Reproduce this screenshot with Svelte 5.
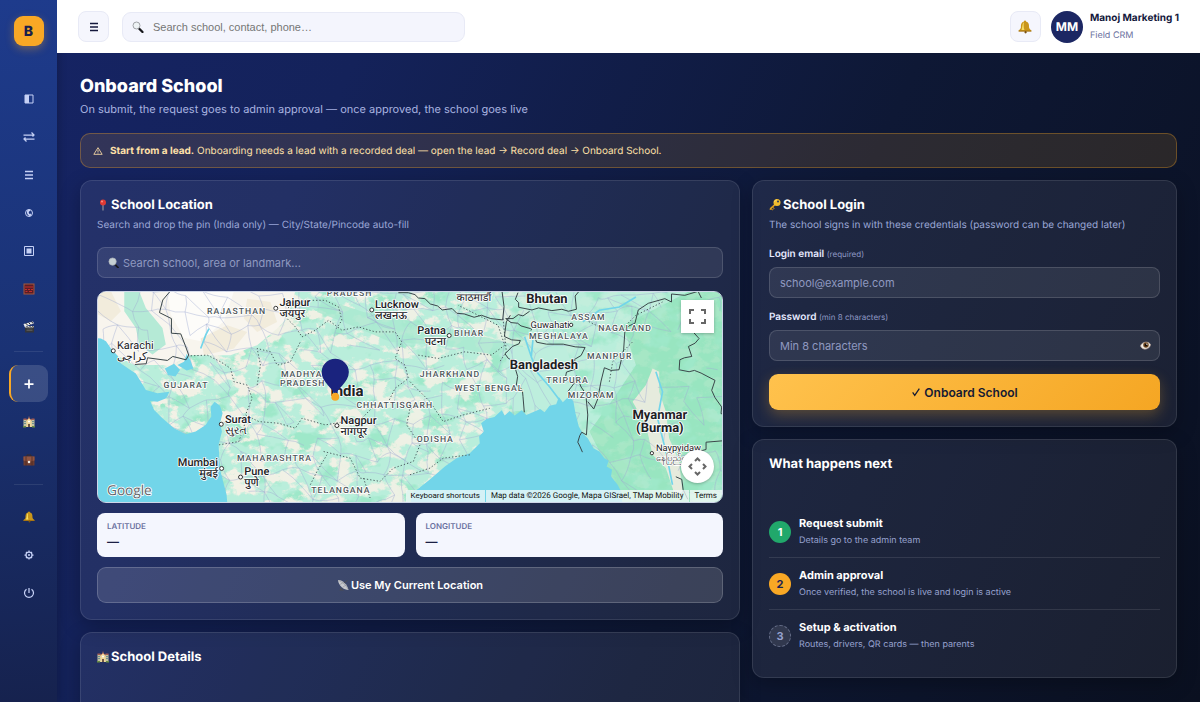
<script>
  let search = $state("")
  let place = $state("")
  let email = $state("")
  let password = $state("")
  let showPassword = $state(false)

  const nav = [
    { icon: "panel", label: "Dashboard" },
    { icon: "swap", label: "Pipeline" },
    { icon: "list", label: "Leads" },
    { icon: "phone", label: "Calls" },
    { icon: "square", label: "Visits" },
    { icon: "calendar", label: "Calendar" },
    { icon: "clapper", label: "Demos" },
    null,
    { icon: "plus", label: "Onboard School", active: true },
    { icon: "school", label: "Schools" },
    { icon: "briefcase", label: "Deals" },
    null,
    { icon: "bell", label: "Notifications" },
    { icon: "gear", label: "Settings" },
    { icon: "power", label: "Log out" },
  ]

  const steps = [
    { state: "done", title: "Request submit", text: "Details go to the admin team" },
    { state: "now", title: "Admin approval", text: "Once verified, the school is live and login is active" },
    { state: "todo", title: "Setup & activation", text: "Routes, drivers, QR cards — then parents" },
  ]

  // map units are a third of a pixel
  const regions = [
    ["RAJASTHAN", 438, 86],
    ["PRADESH", 778, 32],
    ["GUJARAT", 286, 308],
    ["MADHYA", 634, 277],
    ["PRADESH", 637, 304],
    ["CHHATTISGARH", 914, 368],
    ["MAHARASHTRA", 552, 528],
    ["TELANGANA", 752, 624],
    ["BIHAR", 1138, 153],
    ["JHARKHAND", 1080, 275],
    ["WEST BENGAL", 1198, 317],
    ["ODISHA", 1036, 471],
    ["ASSAM", 1497, 104],
    ["NAGALAND", 1607, 136],
    ["MEGHALAYA", 1408, 160],
    ["MANIPUR", 1561, 222],
    ["TRIPURA", 1434, 293],
    ["MIZORAM", 1505, 338],
  ]

  const cities = [
    { name: "Karachi", local: "كراچی", x: 78, y: 191, dot: [67, 197] },
    { name: "Jaipur", local: "जयपुर", x: 567, y: 63, dot: [556, 69], bold: true },
    { name: "Lucknow", local: "लखनऊ", x: 855, y: 68, dot: [845, 74], bold: true },
    { name: "Surat", local: "સુરત", x: 403, y: 413, dot: [392, 418], bold: true },
    { name: "Nagpur", local: "नागपूर", x: 751, y: 416, dot: [740, 422], bold: true },
    { name: "Mumbai", local: "मुंबई", x: 382, y: 545, dot: [393, 551], end: true, bold: true },
    { name: "Pune", local: "पुणे", x: 461, y: 572, dot: [450, 577], bold: true },
    { name: "Patna", local: "पटना", x: 1068, y: 146, dot: [1078, 151], end: true, bold: true },
  ]

  const countries = [
    ["Bhutan", 1372, 52],
    ["Bangladesh", 1363, 251],
    ["Myanmar", 1712, 401],
    ["(Burma)", 1712, 440],
  ]

  let seed = 11
  const rnd = () => {
    seed = (seed * 16807) % 2147483647
    return seed / 2147483647
  }

  const cols = 36
  const rows = 13
  const nodes = []
  for (let r = 0; r < rows; r++) {
    for (let c = 0; c < cols; c++) {
      nodes.push([c * 55 + rnd() * 44, r * 55 + rnd() * 44])
    }
  }
  const link = (a, b) => {
    const mx = (a[0] + b[0]) / 2 + (rnd() - 0.5) * 20
    const my = (a[1] + b[1]) / 2 + (rnd() - 0.5) * 20
    return `M${a.map(Math.round)}Q${Math.round(mx)} ${Math.round(my)} ${b.map(Math.round)}`
  }
  let roads = ""
  for (let r = 0; r < rows - 1; r++) {
    for (let c = 0; c < cols - 1; c++) {
      const i = r * cols + c
      if (c > 29 && rnd() < 0.6) continue
      if (rnd() < 0.65) roads += link(nodes[i], nodes[i + 1])
      if (rnd() < 0.6) roads += link(nodes[i], nodes[i + cols])
      if (rnd() < 0.35) roads += link(nodes[i], nodes[i + cols + 1])
    }
  }
</script>

{#snippet icon(name, size = 12)}
  <svg width={size} height={size} viewBox="0 0 24 24" fill="none" aria-hidden="true">
    {#if name === "panel"}
      <path d="M4 4h16v16H4z" stroke="currentColor" stroke-width="2" />
      <path d="M4 4h8v16H4z" fill="currentColor" />
    {:else if name === "swap"}
      <path d="M1 8h21M17 3l5 5-3 3M23 16H2M7 21l-5-5 3-3" stroke="currentColor" stroke-width="2.500" />
    {:else if name === "list"}
      <path d="M4 5h16M4 12h16M4 19h16" stroke="currentColor" stroke-width="3" />
    {:else if name === "phone"}
      <circle cx="12" cy="12" r="7" stroke="currentColor" stroke-width="2" />
      <path d="M10 5c-4 4-2 11 4 14l3-3-2-3-2 1c-1-1-2-3-1-5l2-1 1-3z" fill="currentColor" />
    {:else if name === "square"}
      <path d="M3 3h18v18H3z" stroke="currentColor" stroke-width="2" />
      <path d="M7 7h10v10H7z" fill="currentColor" />
    {:else if name === "calendar"}
      <path d="M1 1h22v22H1z" fill="#a5593f" />
      <path d="M3 3h18v18H3z" fill="#5d1d24" />
      <path d="M4 8h16M4 13h4M10 13h4M16 13h4M5 17h4M12 17h6" stroke="#c22f2f" stroke-width="2" />
    {:else if name === "clapper"}
      <path d="M4 10h18v13H4z" fill="#35363a" />
      <path d="M1 6l19-5 2 4L3 11z" fill="#e9e9ea" />
      <path d="M3 10h19v3H4z" fill="#d9dadd" />
      <path d="M5 4l4 4M11 3l4 4M17 1l3 4M7 10l3 3M13 10l3 3M19 10l2 3" stroke="#26272b" stroke-width="2" />
      <path d="M7 16h12M7 19h12" stroke="#777" />
    {:else if name === "plus"}
      <path d="M12 3v18M3 12h18" stroke="currentColor" stroke-width="3.500" />
    {:else if name === "school"}
      <path d="M1 7h22v15H1z" fill="#c5c3a0" />
      <path d="M1 5h6v3H1zM17 5h6v3h-6z" fill="#a35d54" />
      <path d="M7 22V9l5-6 5 6v13z" fill="#efd89a" />
      <path d="M12 1v4M7 9l5-5 5 5" stroke="#b46a58" stroke-width="1.500" />
      <path d="M10 16h4v6h-4z" fill="#6d5646" />
      <path d="M2 11h4M2 15h4M18 11h4M18 15h4" stroke="#6f9190" stroke-width="2" />
      <circle cx="12" cy="11" r="2" fill="#fff" />
      <path d="M0 20h6v3H0zM18 20h6v3h-6z" fill="#688b45" />
    {:else if name === "briefcase"}
      <path d="M8 6V2h8v4" stroke="#3b2a27" stroke-width="2" />
      <path d="M1 5h22v18H1z" fill="#6b3c30" />
      <path d="M1 5h22v8l-8 2H9l-8-2z" fill="#915541" />
      <path d="M6 5v18M18 5v18" stroke="#4b2822" stroke-width="1.500" />
      <circle cx="12" cy="16" r="2.500" fill="#f0eee8" />
    {:else if name === "bell"}
      <path d="M12 1c2 0 2 2 2 2 5 1 5 6 5 10 0 3 4 4 4 6H1c0-2 4-3 4-6 0-4 0-9 5-10 0 0 0-2 2-2z" fill="#c9961a" />
      <path d="M10 4c-3 2-2 8-4 13h5c-2-5-1-10-1-13z" fill="#f8dd62" />
      <path d="M1 18h22v2H1z" fill="#a87512" />
      <circle cx="13" cy="21" r="2" fill="#7a5110" />
    {:else if name === "gear"}
      <circle cx="12" cy="12" r="6" stroke="currentColor" stroke-width="2.500" />
      <circle cx="12" cy="12" r="2" fill="currentColor" />
      <path d="M12 3v3M12 18v3M3 12h3M18 12h3M6 6l2 2M16 16l2 2M18 6l-2 2M8 16l-2 2" stroke="currentColor" stroke-width="2.500" />
    {:else if name === "power"}
      <path d="M12 2v10M7 4.500a9 9 0 1 0 10 0" stroke="currentColor" stroke-width="2.500" />
    {:else if name === "lens"}
      <path d="M14 15l7 7" stroke="#17181c" stroke-width="4.500" stroke-linecap="round" />
      <circle cx="9" cy="9" r="7" fill="#eef3f5" stroke="#85888e" stroke-width="1.500" />
    {:else if name === "lens-light"}
      <path d="M15 16l7 7" stroke="#1a1b20" stroke-width="4" stroke-linecap="round" />
      <circle cx="10" cy="10" r="8" fill="#c6d0d4" stroke="#a9b0b8" stroke-width="1.500" />
    {:else if name === "warn"}
      <path d="M12 4L2 20h20z" stroke="currentColor" stroke-width="2" stroke-linejoin="round" />
      <path d="M12 9v6M12 16v2" stroke="currentColor" stroke-width="2" />
    {:else if name === "pushpin"}
      <path d="M12 11v12" stroke="#8d9198" stroke-width="2.500" />
      <circle cx="12" cy="7" r="6" fill="#df3a34" />
      <circle cx="10" cy="5" r="2" fill="#ff8f83" />
    {:else if name === "key"}
      <path d="M14 11L3 22l-2-1 1-3L12 9z" fill="#e0a21e" />
      <path d="M4 20l3 2 2-3M7 16l4 3" stroke="#c98a14" stroke-width="2" />
      <circle cx="16" cy="7" r="7" fill="#f3bd2c" />
      <circle cx="18" cy="5" r="2" fill="#27345c" />
      <path d="M11 6c1-3 3-4 5-4" stroke="#ffe483" stroke-width="1.500" />
    {:else if name === "dish"}
      <path d="M2 2c8-1 19 9 21 20-9 0-20-8-21-20z" fill="#c7c9cd" />
      <path d="M3 3c7 2 16 10 19 18M6 11l8-5M11 17l8-6" stroke="#8e9197" stroke-width="1.200" />
      <path d="M14 8l7-5" stroke="#4b4d53" stroke-width="2" />
      <path d="M7 17l-2 6h9z" fill="#4b4d53" />
    {:else if name === "eye"}
      <path d="M1 13C4 4 18 1 23 10c-1 10-17 15-22 3z" fill="#f1ece4" stroke="#a7938a" stroke-width="1.500" />
      <circle cx="13" cy="11" r="6" fill="#6c451f" />
      <circle cx="13" cy="11" r="3" fill="#120c08" />
      <circle cx="15" cy="9" r="1.500" fill="#fff" />
    {:else if name === "check"}
      <path d="M4 13l5 7L20 4" stroke="currentColor" stroke-width="3" />
    {/if}
  </svg>
{/snippet}

<div class="app">
  <aside class="sidebar">
    <a class="logo" href="#home">B</a>
    <nav>
      {#each nav as item}
        {#if item}
          <a href="#nav" class="item" class:active={item.active} aria-label={item.label}>
            {@render icon(item.icon)}
          </a>
        {:else}
          <hr />
        {/if}
      {/each}
    </nav>
  </aside>

  <div class="page">
    <header>
      <button class="tool" aria-label="Toggle menu">{@render icon("list")}</button>
      <label class="search">
        {@render icon("lens", 12)}
        <input type="search" placeholder="Search school, contact, phone…" aria-label="Search" bind:value={search} />
      </label>
      <button class="tool bell" aria-label="Notifications">{@render icon("bell", 14)}</button>
      <div class="avatar">MM</div>
      <div class="user">
        <strong>Manoj Marketing 1</strong>
        <span>Field CRM</span>
      </div>
    </header>

    <main>
      <h1>Onboard School</h1>
      <p class="lead">On submit, the request goes to admin approval — once approved, the school goes live</p>

      <div class="notice">
        {@render icon("warn", 10)}
        <p><strong>Start from a lead.</strong> Onboarding needs a lead with a recorded deal — open the lead → Record deal → Onboard School.</p>
      </div>

      <div class="columns">
        <div class="col">
          <section class="card">
            <h2>{@render icon("pushpin")}School Location</h2>
            <p class="hint">Search and drop the pin (India only) — City/State/Pincode auto-fill</p>
            <label class="field place">
              {@render icon("lens-light", 11)}
              <input type="text" placeholder="Search school, area or landmark..." aria-label="Search place" bind:value={place} />
            </label>

            <div class="map">
              <svg class="tiles" viewBox="21 18 1878 636" preserveAspectRatio="xMidYMid slice" role="img" aria-label="Map of India">
                <defs>
                  <filter id="cream" x="0" y="0" width="100%" height="100%" color-interpolation-filters="sRGB">
                    <feTurbulence type="fractalNoise" baseFrequency="0.019 0.027" numOctaves="5" seed="4" />
                    <feColorMatrix values="0 0 0 0 .96  0 0 0 0 .945  0 0 0 0 .9  8 0 0 0 -3.900" />
                  </filter>
                  <filter id="mint" x="0" y="0" width="100%" height="100%" color-interpolation-filters="sRGB">
                    <feTurbulence type="fractalNoise" baseFrequency="0.012 0.016" numOctaves="4" seed="9" />
                    <feColorMatrix values="0 0 0 0 .62  0 0 0 0 .91  0 0 0 0 .79  6 0 0 0 -3.200" />
                  </filter>
                  <linearGradient id="fade">
                    <stop offset="0" stop-color="#fff" />
                    <stop offset=".62" stop-color="#fff" stop-opacity=".85" />
                    <stop offset=".72" stop-color="#fff" stop-opacity=".15" />
                    <stop offset="1" stop-color="#fff" stop-opacity=".15" />
                  </linearGradient>
                  <mask id="dry" maskUnits="userSpaceOnUse" x="0" y="0" width="1920" height="680">
                    <rect width="1920" height="680" fill="url(#fade)" />
                  </mask>
                </defs>

                <rect width="1920" height="680" fill="#b9eedb" />
                <path d="M1600 120L1720 60 1800 18 1900 18V654H1600L1540 520 1500 440 1580 330 1640 240z" fill="#98e5c0" />
                <rect width="1920" height="680" filter="url(#mint)" />
                <g mask="url(#dry)"><rect width="1920" height="680" filter="url(#cream)" /></g>
                <path d="M0 0H620L590 100 560 130 500 180 420 210 300 210 240 240 130 240 60 200 0 150z" fill="#f8f5ee" />
                <path d="M100 18l45 0 20 50 50 60 10 50-40 30-40-30-10-50-35-50z" fill="#b5ead6" />
                <path d="M230 18h200l-30 90-70 60-50-10-40-70z" fill="#fdfcf9" />
                <path d="M60 18l30 60-30 30-39-20V18zM330 160l80-40 60 20-40 50-90 20zM470 40l70 10 20 60-60 30-40-40z" fill="#f2ecdc" />
                <path d="M700 40l120 40 160 30 150 30 150 40-60 30-160-30-160-10-140-60-80-30z" fill="#a9e8d0" opacity=".8" />
                <path d="M1630 350l40-50 20-50 20 10 0 60 20 60 10 80 30 70 10 90-20 20-30-90-40-40-20-90z" fill="#e6ebdd" />
                <path d="M1250 180l90 10 90 0 30 80 20 70-90 30-120 10-20-90z" fill="#bdeedd" />

                <path class="roads" d={roads} />
                <path class="river" d="M1330 165l-5 50 20 50 35 40 30 40M1480 110l50-35 60-10 50-30M330 190l15-40 10-20M1325 215l-20-60M1700 260l20 60-15 80 25 100 20 100" />

                <path
                  class="sea"
                  d="M0 158L30 160 45 168 60 190 80 212 90 235 112 250 135 265 150 290 165 315 200 325 236 320 226 340 200 350 178 348 190 375 215 400 250 430 285 448 315 440 345 420 362 395 360 365 372 350 388 362 396 385 388 415 394 440 384 480 386 520 390 560 400 600 408 630 412 680H0z"
                />
                <path class="sea" d="M222 250l28-14 18 18-14 20-22-4zM288 206l12 22 8 22-20 6-28-16 20-10z" />
                <path
                  class="sea"
                  d="M960 680L966 624 985 612 1025 580 1065 545 1100 520 1140 505 1170 475 1168 455 1182 440 1174 415 1190 402 1214 396 1236 376 1245 392 1260 378 1275 392 1296 376 1310 390 1335 380 1352 372 1365 382 1380 362 1400 358 1408 336 1420 352 1440 332 1452 350 1458 385 1468 425 1480 446 1495 460 1512 490 1530 500 1545 520 1558 528 1552 545 1568 555 1565 575 1585 600 1595 620 1602 680z"
                />

                <path
                  class="state"
                  d="M300 212l50-2 40 20 30 20 10 40 40 10 15 40-20 50 40 20 60 5 50 15 20-30 70 20 60-10 50-10 30-30 50-20 20-40 40-30-10-40-30-20 20-50-20-30-60 0-50-15-50 10-40-30-40 30-40 20-20-30-30-30 10-30 50-20 60 0 40 20 10 40-20 30M500 300l10-60-10-50 40 10 20 40 40-10 30-60M385 480l60-10 20-60M700 500l80 20 30 60 60 10 40-40 60-20 20-50-40-60 10-50 60-10M660 600l20-40 30-50M820 580l20 60M985 210l60 10 80-20 80 10 40-30-20-60-60-30-60-30M960 290l60 60 40 60 60-20 80-20M960 570l60-20 40-30 80-10M1240 100l10 100-20 30M1480 100l60 30 60 0 40-40 80-40M1560 290l10-60 60-60"
                />
                <path
                  class="border"
                  d="M238 18l-22 26-10 38 36 18 0 44 28 2 14 36 10 28-8 14-40-10-16 12-60-8-4 18-34 2M925 22h30l20 6 10 10 20 2 16 16 22 6 14 12 30-4 14 14 22 2 30 10 22-6 28 10 36 4 4-40-6-46M1285 22l-8 20 10 10 0 14 40 8 20-6 40 8 30-4 20 6 24-6-4-40 10-12M1320 78l-20 14-14-4-16 12-22 0 16 12 20 2 10 8 28 8 4 2-2 4M1262 90l-12 20-6 44 22 10 26 2-4 10-20 8-22 22 10 14 20 10 2 24 6 20-4 26 18 14 2 20 4 48M1335 155l6 16 30 6 50 0 36 8 30 2-12 24-20 12 6 28-30 10-6 30M1435 320l18-24 8-24 14 34 14 20 6 64-4 60-14-8-6 10-6 20 6 12 8 18M1495 350l18 22 12-30 10-54 10-40 20 8 24-2 14-60 4-60 12-12 18-8 10-40 30-20 50-14 20 10 0-24 40 4 40-12 10 20M1812 140l18 20-12 14-20 10 10 30-22 4-14 6-2 30 30 6 16-4 20 8 42 22-10 30 10 22 20 28-2 20 60 10M1899 468l-48 4 0 22-60 16M1760 576l18 8 4 30 14 30"
                />

                <g class="region">
                  {#each regions as [name, x, y]}
                    <text {x} {y}>{name}</text>
                  {/each}
                </g>
                {#each cities as c}
                  <g class="city" class:end={c.end} class:bold={c.bold}>
                    <circle cx={c.dot[0]} cy={c.dot[1]} r="6" />
                    <text x={c.x} y={c.y}>{c.name}</text>
                    <text class="local" x={c.x} y={c.y + 33}>{c.local}</text>
                  </g>
                {/each}
                <g class="small">
                  <text x="1323" y="127">Guwahati</text>
                  <circle cx="1445" cy="119" r="5" />
                  <text class="nepal" x="1100" y="48">काठमाडौं</text>
                  <text x="1700" y="500">Naypyidaw</text>
                  <text x="1700" y="528">နေပြည်တော်</text>
                  <circle cx="1688" cy="505" r="5" />
                </g>
                <g class="country">
                  {#each countries as [name, x, y]}
                    <text {x} {y}>{name}</text>
                  {/each}
                  <text class="india" x="770" y="332">India</text>
                </g>

                <path d="M735 333c-4-22-41-40-41-72a41 40 0 0 1 82 0c0 32-37 50-41 72z" fill="#1a237e" />
                <circle cx="735" cy="335" r="12" fill="#f9a825" />
                <text class="google" x="48" y="630">Google</text>
              </svg>
              <button class="full" aria-label="Toggle fullscreen view">
                <svg width="17" height="17" viewBox="0 0 17 17" fill="none" stroke="#666" stroke-width="2">
                  <path d="M1 6V2h4M12 2h4v4M16 11v4h-4M5 15H1v-4" />
                </svg>
              </button>
              <button class="pan" aria-label="Map camera controls">
                <svg width="19" height="19" viewBox="0 0 19 19" fill="none" stroke="#666" stroke-width="2">
                  <path d="M7 4l2.500-2.500L12 4M7 15l2.500 2.500L12 15M4 7L1.500 9.500 4 12M15 7l2.500 2.500L15 12" />
                </svg>
              </button>
              <div class="credits">
                <button>Keyboard shortcuts</button>
                <span>Map data ©2026 Google, Mapa GISrael, TMap Mobility</span>
                <a href="#terms">Terms</a>
              </div>
            </div>

            <div class="coords">
              <div><span>LATITUDE</span><b>—</b></div>
              <div><span>LONGITUDE</span><b>—</b></div>
            </div>
            <button class="wide ghost">{@render icon("dish")}Use My Current Location</button>
          </section>

          <section class="card details">
            <h2>{@render icon("school")}School Details</h2>
          </section>
        </div>

        <div class="col">
          <form class="card" onsubmit={(e) => e.preventDefault()}>
            <h2>{@render icon("key")}School Login</h2>
            <p class="hint">The school signs in with these credentials (password can be changed later)</p>
            <label class="caption" for="email">Login email <small>(required)</small></label>
            <div class="field">
              <input id="email" type="email" placeholder="school@example.com" bind:value={email} />
            </div>
            <label class="caption" for="password">Password <small>(min 8 characters)</small></label>
            <div class="field">
              <input id="password" type={showPassword ? "text" : "password"} placeholder="Min 8 characters" bind:value={password} />
              <button type="button" class="eye" aria-label="Show password" onclick={() => (showPassword = !showPassword)}>
                {@render icon("eye", 11)}
              </button>
            </div>
            <button class="wide primary">{@render icon("check", 10)}Onboard School</button>
          </form>

          <section class="card">
            <h2>What happens next</h2>
            <ol>
              {#each steps as step, i}
                <li>
                  <span class="num {step.state}">{i + 1}</span>
                  <div>
                    <strong>{step.title}</strong>
                    <span>{step.text}</span>
                  </div>
                </li>
              {/each}
            </ol>
          </section>
        </div>
      </div>
    </main>
  </div>
</div>

<style>
  :global(body) {
    margin: 0;
    background: #0b1226;
  }
  * {
    box-sizing: border-box;
  }
  button,
  input {
    font: inherit;
    color: inherit;
  }
  button {
    display: flex;
    align-items: center;
    justify-content: center;
    padding: 0;
    border: none;
    cursor: pointer;
  }
  h1,
  h2,
  p,
  ol {
    margin: 0;
    padding: 0;
  }
  .app {
    display: flex;
    height: 100vh;
    font-family: Inter, "Liberation Sans", sans-serif;
    font-size: 11px;
    text-rendering: geometricPrecision;
    color: #fff;
    background: linear-gradient(115deg, #162465 0%, #14225a 25%, #0e1835 62%, #0a1020 100%);
  }
  .sidebar {
    flex: none;
    display: flex;
    flex-direction: column;
    align-items: center;
    width: 57px;
    padding-top: 16px;
    background: linear-gradient(175deg, #1e3b8c 0%, #1a3274 50%, #16224e 100%);
    box-shadow: 2px 0 8px rgba(0, 0, 0, 0.2);
  }
  .logo {
    display: flex;
    align-items: center;
    justify-content: center;
    width: 30px;
    height: 30px;
    border-radius: 9px;
    background: #f9a825;
    box-shadow: 0 3px 8px rgba(249, 168, 37, 0.35);
    color: #1a1f4d;
    font-size: 14px;
    font-weight: 800;
    text-decoration: none;
  }
  nav {
    display: flex;
    flex-direction: column;
    gap: 1px;
    margin-top: 34px;
  }
  .item {
    display: flex;
    align-items: center;
    justify-content: center;
    width: 39px;
    height: 37px;
    border-radius: 9px;
    color: #c5d0f5;
  }
  .item.active {
    color: #fff;
    background: rgba(255, 255, 255, 0.14);
    border-left: 2px solid #f9a825;
    padding-right: 2px;
  }
  hr {
    width: 29px;
    height: 1px;
    margin: 5px auto 12px;
    border: none;
    background: rgba(255, 255, 255, 0.09);
  }
  .page {
    flex: 1;
    min-width: 0;
    display: flex;
    flex-direction: column;
  }
  header {
    flex: none;
    display: flex;
    align-items: center;
    height: 53px;
    padding: 0 21px;
    background: #fff;
    color: #14183c;
  }
  .tool {
    flex: none;
    width: 31px;
    height: 31px;
    border: 1px solid #e8eaf6;
    border-radius: 8px;
    background: #f5f6fd;
  }
  .search {
    flex: 0 1 343px;
    display: flex;
    align-items: center;
    gap: 9px;
    height: 30px;
    margin-left: 13px;
    padding: 0 9px;
    border: 1px solid #e8eaf6;
    border-radius: 9px;
    background: #f4f5fd;
  }
  input {
    flex: 1;
    min-width: 0;
    padding: 0;
    border: none;
    outline: none;
    background: none;
  }
  .search input {
    font-family: "Liberation Sans", Arial, sans-serif;
  }
  .search input::placeholder {
    color: #757575;
  }
  .bell {
    margin-left: auto;
  }
  .avatar {
    flex: none;
    width: 32px;
    height: 32px;
    margin: 0 7px 0 10px;
    border-radius: 50%;
    background: #1c2763;
    color: #fff;
    font-size: 12px;
    font-weight: 700;
    line-height: 32px;
    text-align: center;
  }
  .user {
    display: flex;
    flex-direction: column;
    gap: 4px;
    font-size: 10px;
    line-height: 14px;
    white-space: nowrap;
  }
  .user span {
    color: #6c72a0;
    font-size: 9px;
  }
  main {
    flex: 1;
    min-height: 0;
    overflow-y: auto;
    scrollbar-width: none;
    padding: 22px 23px;
  }
  h1 {
    font-size: 18px;
    font-weight: 800;
    line-height: 24px;
  }
  .lead {
    margin-top: 3px;
    color: #a9b4e0;
    line-height: 14px;
  }
  .notice {
    display: flex;
    align-items: center;
    gap: 7px;
    min-height: 35px;
    margin: 17px 0 12px;
    padding: 0 12px;
    border: 1px solid rgba(249, 168, 37, 0.32);
    border-radius: 10px;
    background: rgba(249, 168, 37, 0.13);
    color: #ffe0a8;
    font-size: 10px;
  }
  .columns {
    display: grid;
    grid-template-columns: minmax(0, 660fr) minmax(0, 425fr);
    gap: 12px;
    align-items: start;
  }
  .col {
    display: flex;
    flex-direction: column;
    gap: 12px;
  }
  .card {
    padding: 16px;
    border: 1px solid rgba(255, 255, 255, 0.1);
    border-radius: 12px;
    background: rgba(255, 255, 255, 0.065);
    box-shadow: 0 6px 20px rgba(0, 0, 0, 0.25);
  }
  .details {
    min-height: 240px;
  }
  h2 {
    display: flex;
    align-items: center;
    gap: 2px;
    font-size: 13px;
    font-weight: 700;
    line-height: 16px;
  }
  .hint {
    margin: 5px 0 15px;
    color: #9ba7d6;
    font-size: 10px;
    line-height: 14px;
  }
  .field {
    display: flex;
    align-items: center;
    height: 31px;
    margin-bottom: 12px;
    padding: 0 10px;
    border: 1px solid rgba(255, 255, 255, 0.14);
    border-radius: 8px;
    background: rgba(255, 255, 255, 0.08);
  }
  .place {
    gap: 4px;
    margin-bottom: 13px;
  }
  .field input::placeholder {
    color: #8f99c0;
    opacity: 1;
  }
  .eye {
    margin-right: -2px;
    background: none;
  }
  .caption {
    display: block;
    margin-bottom: 6px;
    color: #e6eaff;
    font-size: 10px;
    font-weight: 600;
    line-height: 14px;
  }
  .caption small {
    color: #8f99c4;
    font-size: 8px;
    font-weight: 400;
    line-height: 1;
  }
  .wide {
    width: 100%;
    height: 36px;
    border-radius: 9px;
    font-weight: 600;
  }
  .ghost {
    gap: 2px;
    border: 1px solid rgba(255, 255, 255, 0.18);
    background: rgba(255, 255, 255, 0.13);
  }
  .primary {
    gap: 3px;
    margin-top: 13px;
    background: linear-gradient(135deg, #ffc24d, #f5a623);
    box-shadow: 0 5px 14px rgba(249, 168, 37, 0.28);
    color: #141a33;
    font-size: 12px;
  }
  .map {
    position: relative;
    height: 212px;
    overflow: hidden;
    border: 1px solid #cfd6e8;
    border-radius: 9px;
    font-family: Roboto, "Noto Sans", sans-serif;
  }
  .tiles {
    display: block;
    width: 100%;
    height: 100%;
  }
  .roads {
    fill: none;
    stroke: #9fabd2;
    stroke-width: 2;
    opacity: 0.65;
  }
  .river {
    fill: none;
    stroke: #72d5ea;
    stroke-width: 5;
  }
  .sea {
    fill: #72d5e9;
  }
  .state {
    fill: none;
    stroke: #4f6163;
    stroke-width: 3;
    stroke-dasharray: 4 6;
  }
  .border {
    fill: none;
    stroke: #3a4649;
    stroke-width: 3;
    stroke-linejoin: round;
  }
  .tiles text {
    fill: #202124;
    stroke: #fff;
    stroke-width: 5px;
    stroke-linejoin: round;
    paint-order: stroke;
  }
  .region text {
    fill: #4c5558;
    font-size: 26px;
    font-weight: 500;
    letter-spacing: 3px;
    text-anchor: middle;
  }
  .city text {
    font-size: 33px;
  }
  .city.bold text {
    font-weight: 500;
  }
  .city.end text {
    text-anchor: end;
  }
  .city .local {
    font-size: 33px;
  }
  .city circle,
  .small circle {
    fill: #fff;
    stroke: #333;
    stroke-width: 3;
  }
  .small text {
    font-size: 28px;
  }
  .small .nepal {
    font-size: 32px;
  }
  .country text {
    font-size: 39px;
    font-weight: 700;
    text-anchor: middle;
  }
  .country .india {
    font-size: 45px;
  }
  .tiles .google {
    fill: #5f6368;
    font-family: "Open Sans", sans-serif;
    font-size: 41px;
    font-weight: 500;
  }
  .full,
  .pan {
    position: absolute;
    right: 8px;
    width: 33px;
    height: 33px;
    background: #fff;
    box-shadow: 0 1px 3px rgba(0, 0, 0, 0.25);
  }
  .full {
    top: 8px;
  }
  .pan {
    bottom: 19px;
    border-radius: 50%;
  }
  .credits {
    position: absolute;
    right: 0;
    bottom: 0;
    display: flex;
    gap: 1px;
    height: 12px;
    color: #111;
    font-size: 8px;
    line-height: 12px;
    white-space: nowrap;
  }
  .credits > * {
    padding: 0 5px;
    background: rgba(245, 250, 250, 0.75);
    color: inherit;
    text-decoration: none;
  }
  .coords {
    display: grid;
    grid-template-columns: 1fr 1fr;
    gap: 11px;
    margin: 10px 0;
  }
  .coords div {
    display: flex;
    flex-direction: column;
    height: 44px;
    padding: 7px 10px;
    border-radius: 8px;
    background: #f4f6fe;
    color: #1b1f44;
  }
  .coords span {
    color: #6a709e;
    font-size: 8px;
    font-weight: 600;
    line-height: 13px;
  }
  .coords b {
    font-size: 12px;
    line-height: 17px;
  }
  ol {
    margin-top: 34px;
    list-style: none;
  }
  li {
    display: flex;
    align-items: center;
    gap: 8px;
    min-height: 51px;
  }
  li + li {
    border-top: 1px solid rgba(255, 255, 255, 0.1);
    min-height: 52px;
  }
  li div {
    display: flex;
    flex-direction: column;
    line-height: 17px;
  }
  li div span {
    color: #97a2cf;
    font-size: 9px;
  }
  .num {
    flex: none;
    width: 22px;
    height: 22px;
    border-radius: 50%;
    font-weight: 700;
    line-height: 22px;
    text-align: center;
  }
  .num.done {
    background: #21a86b;
  }
  .num.now {
    background: #f9a825;
    color: #1c2353;
  }
  .num.todo {
    border: 1px dashed #646c87;
    background: rgba(255, 255, 255, 0.09);
    color: #97a2d0;
    line-height: 20px;
  }
</style>
